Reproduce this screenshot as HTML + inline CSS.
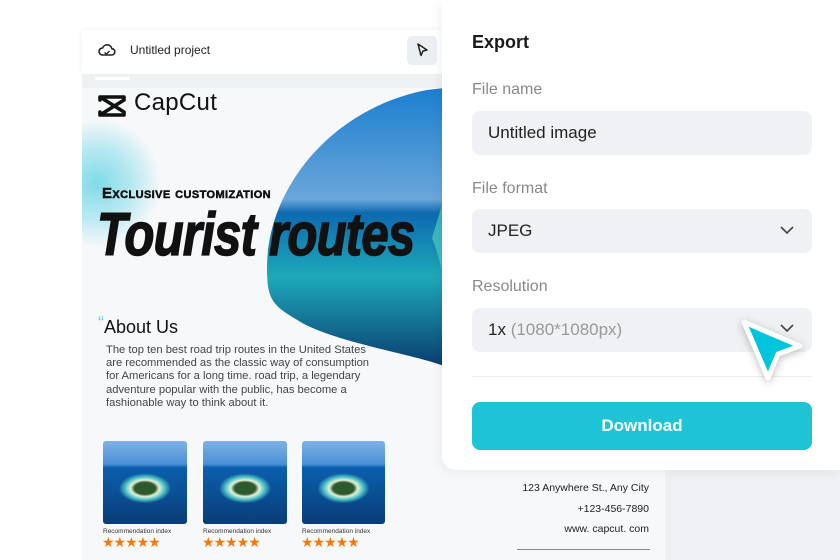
<!DOCTYPE html>
<html><head><meta charset="utf-8"><style>
*{margin:0;padding:0;box-sizing:border-box}
body{width:840px;height:560px;overflow:hidden;background:#fff;font-family:"Liberation Sans",sans-serif;position:relative}
.abs{position:absolute}
.th{background:radial-gradient(ellipse 26px 15px at 50% 57%,#2d5a2c 0%,#2d5a2c 40%,#e8f0d8 55%,#4fc7c8 75%,rgba(14,94,159,0) 100%),linear-gradient(#7fb2e6 0%,#4a8fd6 28%,#0b5fae 32%,#0a3d78 100%);border-radius:3px}
</style></head><body>
<div class="abs" style="left:665px;top:440px;width:175px;height:120px;background:#eef0f3"></div>
<div class="abs" style="left:82px;top:30px;width:360px;height:44px;background:#fff;box-shadow:0 0 6px rgba(0,0,0,.06)"></div>
<svg class="abs" style="left:98px;top:42px" width="18" height="16" viewBox="0 0 18 16"><path d="M4.5 13h9a3.2 3.2 0 0 0 .3-6.4A4.8 4.8 0 0 0 4.6 6 3.5 3.5 0 0 0 4.5 13z" fill="none" stroke="#222" stroke-width="1.6"/><path d="M6.5 10.5l2 1.5 3-3" fill="none" stroke="#222" stroke-width="1.4"/></svg>
<div class="abs" style="left:130px;top:43px;font-size:12px;color:#222">Untitled project</div>
<div class="abs" style="left:407px;top:36px;width:30px;height:29px;border-radius:5px;background:#eceff2"></div>
<svg class="abs" style="left:414px;top:42px" width="16" height="16" viewBox="0 0 16 16"><path d="M4 2l9 6-4 1-2 4.5z" fill="none" stroke="#222" stroke-width="1.5" stroke-linejoin="round"/></svg>
<div class="abs" style="left:82px;top:74px;width:360px;height:14px;background:#eef1f3"></div>
<div class="abs" style="left:95px;top:77px;width:35px;height:3px;background:#fff;border-radius:2px"></div>
<div class="abs" style="left:82px;top:88px;width:583px;height:472px;background:#f7f8fa;overflow:hidden">
 <div class="abs" style="left:-50px;top:30px;width:130px;height:130px;border-radius:50%;background:radial-gradient(circle,#7fdbe8 0%,rgba(127,219,232,.5) 40%,rgba(247,248,250,0) 70%)"></div>
 <svg class="abs" style="left:0;top:0" width="583" height="300">
  <defs><linearGradient id="g" x1="0" y1="0" x2="0" y2="1"><stop offset="0" stop-color="#1b7fd0"/><stop offset=".40" stop-color="#6aa6da"/><stop offset=".45" stop-color="#0d6ab0"/><stop offset=".68" stop-color="#1ea9b9"/><stop offset="1" stop-color="#0a3d70"/></linearGradient></defs>
  <path d="M345 2 C250 20 185 100 185 180 C185 215 192 218 222 236 C262 256 330 266 362 278 L362 0 Z" fill="url(#g)"/>
  <path d="M350 150 C356 165 358 175 362 190 L362 110Z" fill="#4fcfc0" opacity=".7"/>
 </svg>
 <svg class="abs" style="left:15px;top:5px" width="32" height="26" viewBox="0 0 32 26"><path d="M3 4h24v3 M3 22h24v-3 M3 4 L27 19 M3 22 L27 7 M3 4v3 M3 22v-3" fill="none" stroke="#111" stroke-width="3.6" stroke-linejoin="round" stroke-linecap="round"/></svg>
 <div class="abs" style="left:52px;top:1px;font-size:24px;color:#111;letter-spacing:.3px">CapCut</div>
 <div class="abs" style="left:20px;top:97px;font-size:15px;font-weight:900;color:#111;font-variant:small-caps;letter-spacing:.4px;-webkit-text-stroke:.5px #111">Exclusive customization</div>
 <div class="abs" style="left:15px;top:112px;font-size:60px;font-weight:bold;font-style:italic;color:#111;transform:scaleX(.82);transform-origin:left;letter-spacing:-1px;white-space:nowrap;-webkit-text-stroke:1.5px #111">Tourist routes</div>
 <div class="abs" style="left:16px;top:229px;font-size:18px;color:#111"><span style="color:#6cd0e6;font-size:18px;position:relative;top:-4px">“</span>About Us</div>
 <div class="abs" style="left:24px;top:256px;width:268px;font-size:11.2px;line-height:13.2px;color:#444">The top ten best road trip routes in the United States are recommended as the classic way of consumption for Americans for a long time. road trip, a legendary adventure popular with the public, has become a fashionable way to think about it.</div>
 <div class="abs th" style="left:21px;top:353px;width:84px;height:83px"></div>
 <div class="abs th" style="left:121px;top:353px;width:84px;height:83px"></div>
 <div class="abs th" style="left:220px;top:353px;width:83px;height:83px"></div>
 <div class="abs" style="left:21px;top:440px;font-size:6.5px;color:#333">Recommendation index</div>
 <div class="abs" style="left:121px;top:440px;font-size:6.5px;color:#333">Recommendation index</div>
 <div class="abs" style="left:220px;top:440px;font-size:6.5px;color:#333">Recommendation index</div>
 <div class="abs" style="left:20px;top:446px;font-size:14px;color:#f07a10;letter-spacing:-1px">★★★★★</div>
 <div class="abs" style="left:120px;top:446px;font-size:14px;color:#f07a10;letter-spacing:-1px">★★★★★</div>
 <div class="abs" style="left:219px;top:446px;font-size:14px;color:#f07a10;letter-spacing:-1px">★★★★★</div>
 <div class="abs" style="left:380px;top:390px;width:187px;text-align:right;font-size:10.5px;color:#222;line-height:20.5px">123 Anywhere St., Any City<br>+123-456-7890<br>www. capcut. com</div>
 <div class="abs" style="left:435px;top:461px;width:133px;height:1px;background:#888"></div>
</div>
<div class="abs" style="left:442px;top:0;width:398px;height:470px;background:#fff;border-bottom-left-radius:14px;box-shadow:-2px 2px 10px rgba(0,0,0,.06)"></div>
<div class="abs" style="left:472px;top:32px;font-size:18px;font-weight:bold;color:#1a1a1a">Export</div>
<div class="abs" style="left:472px;top:81px;font-size:16px;color:#888">File name</div>
<div class="abs" style="left:472px;top:111px;width:340px;height:44px;background:#eff1f4;border-radius:8px"></div>
<div class="abs" style="left:488px;top:123px;font-size:17px;color:#222">Untitled image</div>
<div class="abs" style="left:472px;top:180px;font-size:16px;color:#888">File format</div>
<div class="abs" style="left:472px;top:209px;width:340px;height:44px;background:#eff1f4;border-radius:8px"></div>
<div class="abs" style="left:488px;top:221px;font-size:17px;color:#222">JPEG</div>
<svg class="abs" style="left:779px;top:224px" width="16" height="12"><path d="M2 3l6 6 6-6" fill="none" stroke="#444" stroke-width="1.6"/></svg>
<div class="abs" style="left:472px;top:278px;font-size:16px;color:#888">Resolution</div>
<div class="abs" style="left:472px;top:308px;width:340px;height:44px;background:#eff1f4;border-radius:8px"></div>
<div class="abs" style="left:488px;top:320px;font-size:17px;color:#222">1x <span style="color:#999">(1080*1080px)</span></div>
<svg class="abs" style="left:779px;top:322px" width="16" height="12"><path d="M2 3l6 6 6-6" fill="none" stroke="#444" stroke-width="1.6"/></svg>
<div class="abs" style="left:472px;top:376px;width:340px;height:1px;background:#eceef0"></div>
<div class="abs" style="left:472px;top:402px;width:340px;height:48px;background:#1fc3d6;border-radius:8px;color:#fff;font-size:17px;font-weight:bold;text-align:center;line-height:48px">Download</div>
<svg class="abs" style="left:736px;top:316px" width="72" height="72" viewBox="0 0 72 72"><path d="M8 6 L64 30 L42 38 L32 62 Z" fill="#00c4dc" stroke="#fff" stroke-width="5" stroke-linejoin="round" style="filter:drop-shadow(0 2px 4px rgba(0,0,0,.25))"/></svg>
</body></html>
